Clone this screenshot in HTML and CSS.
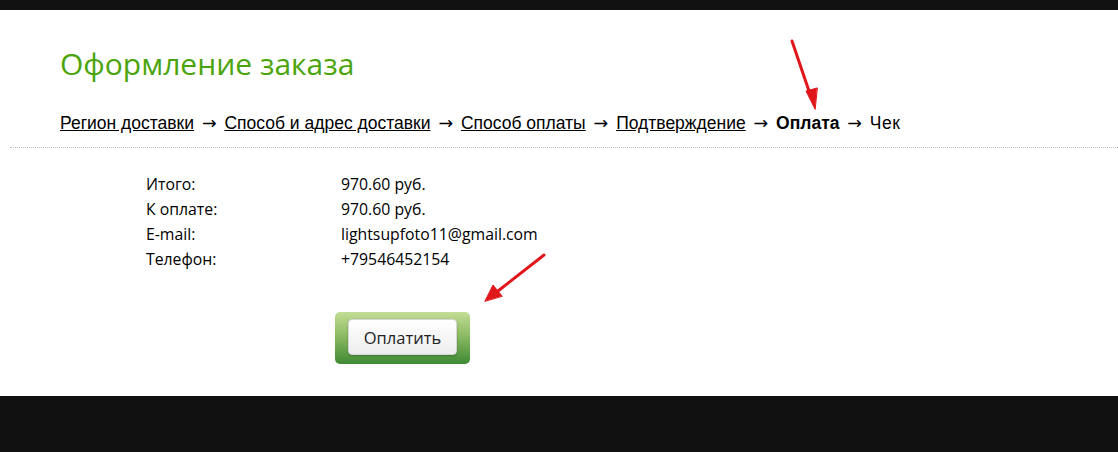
FILE: index.html
```html
<!DOCTYPE html>
<html lang="ru">
<head>
    <meta charset="UTF-8">
    <title>Оформление заказа</title>
    <link rel="stylesheet" href="styles.css">
</head>
<body>
    <div class="topbar"></div>

    <div class="page">
        <h1>Оформление заказа</h1>
        <div class="steps">
            <a href="#">Регион доставки</a> <span class="arr">&rarr;</span>
            <a href="#">Способ и адрес доставки</a> <span class="arr">&rarr;</span>
            <a href="#">Способ оплаты</a> <span class="arr">&rarr;</span>
            <a href="#">Подтверждение</a> <span class="arr">&rarr;</span>
            <b>Оплата</b> <span class="arr">&rarr;</span>
            <span class="last">Чек</span>
        </div>
        <hr class="sep">

        <table class="summary">
            <tr><td class="label">Итого:</td><td>970.60 руб.</td></tr>
            <tr><td class="label">К оплате:</td><td>970.60 руб.</td></tr>
            <tr><td class="label">E-mail:</td><td>lightsupfoto11@gmail.com</td></tr>
            <tr><td class="label">Телефон:</td><td>+79546452154</td></tr>
        </table>

        <div class="pay-row">
            <div class="pay-box">
                <button class="pay-button">Оплатить</button>
            </div>
        </div>

        <!-- red annotation arrows -->
        <svg class="arrows" width="1118" height="452" viewBox="0 0 1118 452">
            <g stroke="#e0161b" stroke-width="3" fill="#e0161b" stroke-linecap="round">
                <line x1="792" y1="41" x2="810" y2="94"/>
                <polygon points="815,109 806,91 817,88" stroke-width="1"/>
                <line x1="544" y1="255" x2="498" y2="291"/>
                <polygon points="485,301 493,285 502,296" stroke-width="1"/>
            </g>
        </svg>
    </div>

    <div class="footer"></div>
</body>
</html>
```

FILE: styles.css
```css
body {
    margin: 0;
    padding: 0;
    background-color: #fff;
    font-family: "Liberation Sans", Arial, sans-serif;
    color: #000;
}

.topbar {
    height: 10px;
    background-color: #111;
}

.page {
    position: relative;
    height: 386px;
    box-sizing: border-box;
    padding-top: 33px;
}

h1 {
    margin: 0 0 0 60px;
    font-family: "Open Sans", sans-serif;
    font-weight: normal;
    font-size: 30px;
    line-height: 42px;
    color: #4ca40c;
}

.steps {
    margin: 28px 0 0 60px;
    font-size: 17.5px;
    line-height: 20px;
}

.steps a {
    color: #000;
}

.steps .arr {
    font-family: "DejaVu Sans", sans-serif;
    font-size: 17.5px;
    margin: 0 3px;
}

.steps .last {
    letter-spacing: 0.5px;
}

.sep {
    margin: 14px 0 0 10px;
    border: none;
    border-top: 1px dotted #bbb;
    height: 0;
}

.summary {
    margin: 23px 0 0 146px;
    border-collapse: collapse;
    font-family: "Open Sans", sans-serif;
    font-size: 15.8px;
}

.summary td {
    padding: 0;
    height: 25px;
    vertical-align: middle;
}

.summary .label {
    width: 195px;
}

.pay-row {
    margin: 41px 0 0 335px;
}

.pay-box {
    display: inline-block;
    width: 135px;
    height: 52px;
    box-sizing: border-box;
    padding: 7px 0 0 13px;
    border-radius: 5px;
    background: linear-gradient(#c3dd96, #8dbb63 45%, #3e8933);
}

.pay-button {
    width: 109px;
    height: 36px;
    border: 1px solid #d6d6d6;
    border-radius: 4px;
    background: linear-gradient(#ffffff, #ededed);
    font-family: "Open Sans", sans-serif;
    font-size: 16.5px;
    color: #222;
    cursor: pointer;
    box-shadow: 0 1px 2px rgba(0, 0, 0, 0.25);
}

.arrows {
    position: absolute;
    left: 0;
    top: -10px;
    pointer-events: none;
}

.footer {
    height: 56px;
    background-color: #111;
}
```
